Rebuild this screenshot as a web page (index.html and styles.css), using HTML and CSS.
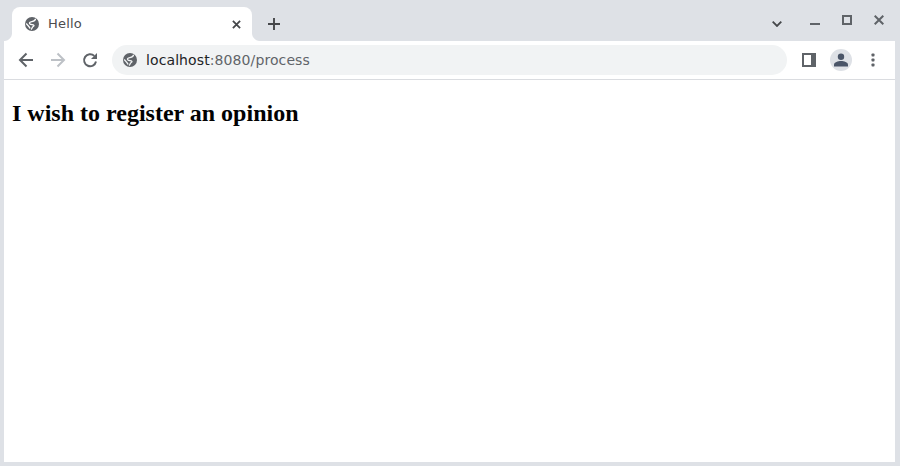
FILE: index.html
```html
<!DOCTYPE html>
<html lang="en">
<head>
<meta charset="utf-8">
<title>Hello</title>
<link rel="stylesheet" href="styles.css">
</head>
<body>
<div class="frame">
  <div class="tabstrip">
    <div class="tab">
      <svg class="globe" viewBox="0 0 14 14"><circle cx="7" cy="7" r="7" fill="#5f6368"/><path d="M10.500 1.800C10.500 4 8.500 4.300 6.800 4.600 5 5 3.800 5.600 4.800 6.800 5.800 8 8 7.200 8.800 8.200 9.500 9 8 9.500 7.500 10.200 7 11 6.800 12 6 12.500M1.200 6.500C2.500 8 4.500 9.500 5 11.500" stroke="#fff" stroke-width="1.300" fill="none"/></svg>
      <span class="tab-title">Hello</span>
      <svg class="tab-close" viewBox="0 0 10 10"><path d="M1 1l8 8M9 1l-8 8" stroke="#45474a" stroke-width="2" fill="none"/></svg>
    </div>
    <svg class="new-tab" viewBox="0 0 12 12"><path d="M6 0v12M0 6h12" stroke="#45474a" stroke-width="1.900" fill="none"/></svg>
    <div class="window-controls">
      <svg class="chevron" viewBox="0 0 10 6"><path d="M.7.7L5 5l4.300-4.300" stroke="#45474a" stroke-width="1.800" fill="none"/></svg>
      <svg class="minimize" viewBox="0 0 10 2"><path d="M0 1h10" stroke="#5f6368" stroke-width="2"/></svg>
      <svg class="maximize" viewBox="0 0 10 10"><rect x="1" y="1" width="8" height="8" stroke="#5f6368" stroke-width="2" fill="none"/></svg>
      <svg class="win-close" viewBox="0 0 10 10"><path d="M.7.7l8.600 8.600M9.300.7L.7 9.300" stroke="#5f6368" stroke-width="2" fill="none"/></svg>
    </div>
  </div>
  <div class="toolbar">
    <svg class="nav back" viewBox="0 0 16 16"><path d="M15 8H2.500M8.500 1.500L2 8l6.500 6.500" stroke="#5f6368" stroke-width="2" fill="none"/></svg>
    <svg class="nav forward" viewBox="0 0 16 16"><path d="M1 8h12.500M7.500 1.500L14 8l-6.500 6.500" stroke="#bdc1c6" stroke-width="2" fill="none"/></svg>
    <svg class="nav reload" viewBox="0 0 16 16"><path d="M14 9.500A6 6 0 1 1 12.300 3.900" stroke="#5f6368" stroke-width="2" fill="none"/><path d="M15 1v6H9z" fill="#5f6368"/></svg>
    <div class="omnibox">
      <svg class="globe" viewBox="0 0 14 14"><circle cx="7" cy="7" r="7" fill="#5f6368"/><path d="M10.500 1.800C10.500 4 8.500 4.300 6.800 4.600 5 5 3.800 5.600 4.800 6.800 5.800 8 8 7.200 8.800 8.200 9.500 9 8 9.500 7.500 10.200 7 11 6.800 12 6 12.500M1.200 6.500C2.500 8 4.500 9.500 5 11.500" stroke="#f1f3f4" stroke-width="1.300" fill="none"/></svg>
      <span class="url"><span class="host">localhost</span>:8080/process</span>
    </div>
    <svg class="side-panel" viewBox="0 0 14 14"><path fill="#5f6368" fill-rule="evenodd" d="M0 0h14v14H0zM2 2v10h7V2z"/></svg>
    <div class="avatar">
      <svg viewBox="0 0 14 14"><circle cx="7" cy="3.800" r="3.200" fill="#4a5568"/><path d="M0 13.500v-2C0 9.500 4 8 7 8s7 1.500 7 3.500v2z" fill="#4a5568"/></svg>
    </div>
    <svg class="menu" viewBox="0 0 4 14"><rect x=".5" y=".5" width="3" height="3" rx=".8" fill="#5f6368"/><rect x=".5" y="5.500" width="3" height="3" rx=".8" fill="#5f6368"/><rect x=".5" y="10.500" width="3" height="3" rx=".8" fill="#5f6368"/></svg>
  </div>
  <main class="page">
    <h1>I wish to register an opinion</h1>
  </main>
</div>
</body>
</html>
```
FILE: styles.css
```css
html, body {
  margin: 0;
  height: 100%;
}

body {
  overflow: hidden;
  background: #dee1e6;
}

svg {
  display: block;
  flex: none;
}

.frame {
  box-sizing: border-box;
  height: 466px;
  padding: 0 5px 4px 4px;
  display: flex;
  flex-direction: column;
}

.tabstrip {
  height: 41px;
  flex: none;
  display: flex;
  align-items: flex-start;
  padding-left: 8px;
}

.tab {
  position: relative;
  box-sizing: border-box;
  width: 240px;
  height: 34px;
  margin-top: 7px;
  padding: 0 11px 0 13px;
  background: #fff;
  border-radius: 8px 8px 0 0;
  display: flex;
  align-items: center;
}

.tab::before,
.tab::after {
  content: "";
  position: absolute;
  bottom: 0;
  width: 8px;
  height: 8px;
}

.tab::before {
  left: -8px;
  background: radial-gradient(circle at 0 0, transparent 7.500px, #fff 8.500px);
}

.tab::after {
  right: -8px;
  background: radial-gradient(circle at 100% 0, transparent 7.500px, #fff 8.500px);
}

.globe {
  width: 14px;
  height: 14px;
}

.tab-title {
  margin-left: 9px;
  flex: 1;
  font: 13px/16px "DejaVu Sans", sans-serif;
  letter-spacing: 0.2px;
  color: #4a4a4c;
  opacity: 0.99;
}

.tab-close {
  width: 9px;
  height: 9px;
}

.new-tab {
  width: 12px;
  height: 12px;
  margin: 18px 0 0 16px;
}

.window-controls {
  margin-left: auto;
  height: 41px;
  position: relative;
  width: 130px;
}

.window-controls svg {
  position: absolute;
}

.chevron {
  width: 10px;
  height: 6px;
  left: 7px;
  top: 21px;
}

.minimize {
  width: 10px;
  height: 2px;
  left: 45px;
  top: 23px;
}

.maximize {
  width: 10px;
  height: 10px;
  left: 77px;
  top: 15px;
}

.win-close {
  width: 10px;
  height: 10px;
  left: 109px;
  top: 15px;
}

.toolbar {
  box-sizing: border-box;
  height: 39px;
  flex: none;
  display: flex;
  align-items: center;
  background: #fff;
  border-bottom: 1px solid #dadce0;
  padding: 0 0 1px 14px;
}

.nav {
  width: 16px;
  height: 16px;
  margin-right: 16px;
}

.omnibox {
  width: 675px;
  height: 30px;
  margin-left: -2px;
  box-sizing: border-box;
  border-radius: 15px;
  background: #f1f3f4;
  padding-left: 11px;
  display: flex;
  align-items: center;
}

.url {
  margin-left: 9px;
  font: 14px/16px "DejaVu Sans", sans-serif;
  letter-spacing: 0.1px;
  color: #5f6368;
  opacity: 0.99;
}

.host {
  color: #202124;
}

.side-panel {
  width: 14px;
  height: 14px;
  margin-left: 15px;
}

.avatar {
  width: 22px;
  height: 22px;
  margin-left: 14px;
  border-radius: 50%;
  background: #dee1e6;
  display: flex;
  align-items: center;
  justify-content: center;
}

.avatar svg {
  width: 14px;
  height: 14px;
}

.menu {
  width: 4px;
  height: 14px;
  margin-left: 19px;
}

.page {
  flex: 1;
  background: #fff;
  padding: 0 8px;
}

h1 {
  margin: 0;
  padding-top: 19px;
  font: bold 24px/28px "Liberation Serif", serif;
  color: #000;
  opacity: 0.99;
}
```
